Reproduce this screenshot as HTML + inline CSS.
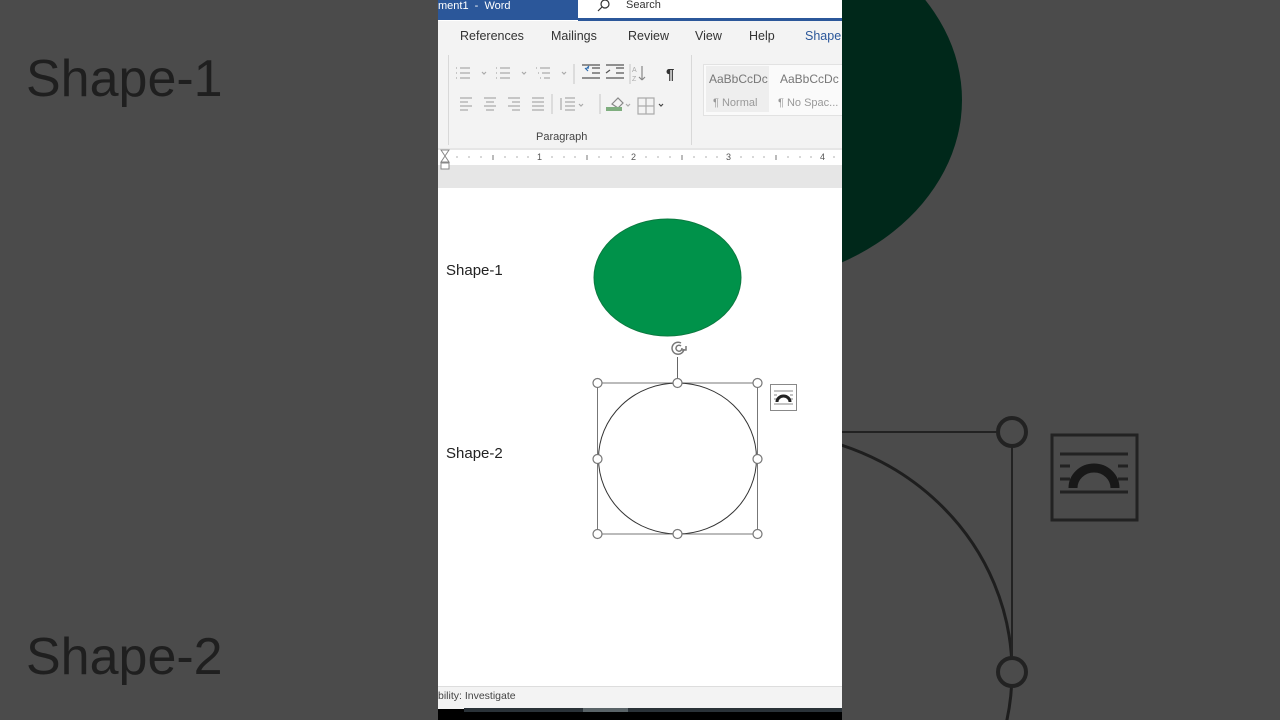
<!DOCTYPE html>
<html><head><meta charset="utf-8"><style>
html,body{margin:0;padding:0;width:1280px;height:720px;overflow:hidden;background:#4b4b4b;font-family:"Liberation Sans",sans-serif}
.abs{position:absolute}
</style></head><body>
<svg class="abs" style="left:0;top:0" width="1280" height="720">
<rect width="1280" height="720" fill="#4b4b4b"/>
<ellipse cx="728" cy="100" rx="234" ry="186" fill="#00281a"/>
<ellipse cx="759" cy="672" rx="253" ry="240" fill="none" stroke="#1e1e1e" stroke-width="3"/>
<line x1="842" y1="432" x2="1012" y2="432" stroke="#222" stroke-width="2"/>
<line x1="1012" y1="432" x2="1012" y2="672" stroke="#222" stroke-width="2"/>
<circle cx="1012" cy="432" r="14" fill="#4b4b4b" stroke="#222" stroke-width="4"/>
<circle cx="1012" cy="672" r="14" fill="#4b4b4b" stroke="#222" stroke-width="4"/>
<rect x="1052" y="435" width="85" height="85" fill="none" stroke="#222" stroke-width="3"/>
<g stroke="#222" stroke-width="3"><line x1="1060" y1="454" x2="1128" y2="454"/><line x1="1060" y1="492" x2="1128" y2="492"/>
<line x1="1060" y1="466" x2="1070" y2="466"/><line x1="1118" y1="466" x2="1128" y2="466"/><line x1="1060" y1="479" x2="1070" y2="479"/><line x1="1118" y1="479" x2="1128" y2="479"/></g>
<path d="M1073 488 A21 20 0 0 1 1115 488" fill="none" stroke="#181818" stroke-width="9"/>
<text x="26" y="96" font-size="52" fill="#1f1f1f" font-family="Liberation Sans, sans-serif">Shape-1</text>
<text x="26" y="674" font-size="52" fill="#1f1f1f" font-family="Liberation Sans, sans-serif">Shape-2</text>
</svg>

<div class="abs" style="left:438px;top:0;width:404px;height:720px;background:#fff;overflow:hidden">
  <div class="abs" style="left:0;top:0;width:140px;height:20px;background:#2b579a;color:#fff;font-size:11px;line-height:12px">ment1 &nbsp;-&nbsp; Word</div>
  <div class="abs" style="left:140px;top:0;width:264px;height:18px;background:#fff"></div>
  <div class="abs" style="left:140px;top:18px;width:264px;height:3px;background:#2b579a"></div>
  <svg class="abs" style="left:158px;top:0" width="16" height="14"><circle cx="9" cy="4" r="4" fill="none" stroke="#333" stroke-width="1.2"/><line x1="6" y1="7" x2="2" y2="11" stroke="#333" stroke-width="1.2"/></svg>
  <div class="abs" style="left:188px;top:-1px;font-size:11px;color:#333">Search</div>
  <div class="abs" style="left:0;top:21px;width:404px;height:127px;background:#f3f3f3"></div>
  <div class="abs" style="left:0;top:29px;width:404px;font-size:12.5px;color:#333">
    <span class="abs" style="left:22px">References</span><span class="abs" style="left:113px">Mailings</span><span class="abs" style="left:190px">Review</span><span class="abs" style="left:257px">View</span><span class="abs" style="left:311px">Help</span><span class="abs" style="left:367px;color:#2b579a">Shape</span>
  </div>
  <div class="abs" style="left:10px;top:55px;width:1px;height:90px;background:#d8d8d8"></div>
  <div class="abs" style="left:253px;top:55px;width:1px;height:90px;background:#d8d8d8"></div>
  <svg class="abs" style="left:16px;top:62px" width="230" height="56" fill="none" stroke="#aaa" stroke-width="1.2">
    <g><path d="M6 6h10M6 11h10M6 16h10"/><path d="M2 6h1M2 11h1M2 16h1"/><path d="M28 10l2 2 2-2"/></g>
    <g transform="translate(40,0)"><path d="M6 6h10M6 11h10M6 16h10M2 6h1M2 11h1M2 16h1M28 10l2 2 2-2"/></g>
    <g transform="translate(80,0)"><path d="M6 6h10M8 11h8M10 16h6M2 6h1M4 11h1M6 16h1M28 10l2 2 2-2"/></g>
    <path d="M120 2v20M176 2v20" stroke="#ccc"/>
    <g stroke="#2b6cb0"><path d="M135 6h-2l2-2M131 6l3 3"/></g>
    <g stroke="#555"><path d="M138 6h8M138 11h8M128 16h18M128 3h18"/></g>
    <g stroke="#555"><path d="M162 6h8M162 11h8M152 16h18M152 3h18M152 11l4-3"/></g>
    <path d="M188 4v14M188 18l-3-3M188 18l3-3" stroke="#888"/>
    <text x="178" y="10" font-size="7" fill="#aaa" stroke="none">A</text><text x="178" y="19" font-size="7" fill="#aaa" stroke="none">Z</text>
    <text x="212" y="17" font-size="15" fill="#333" stroke="none" font-weight="bold">¶</text>
    <g transform="translate(0,30)"><path d="M6 6h12M6 10h8M6 14h12M6 18h8"/><path d="M30 6h12M32 10h8M30 14h12M32 18h8"/><path d="M54 6h12M58 10h8M54 14h12M58 18h8"/><path d="M78 6h12M78 10h12M78 14h12M78 18h12"/>
    <path d="M98 2v20M146 2v20" stroke="#ccc"/><path d="M111 6h10M111 10h10M111 14h10M111 18h10M107 6v12"/><path d="M125 12l2 2 2-2"/>
    <path d="M158 12l6-6 5 5-5 5z" stroke="#888"/><path d="M172 12l2 2 2-2"/><path d="M184 6h16v16h-16zM192 6v16M184 14h16"/><path d="M205 12l2 2 2-2" stroke="#444"/></g>
  </svg>
  <div class="abs" style="left:168px;top:107px;width:16px;height:4px;background:#7fae7f"></div>
  <div class="abs" style="left:265px;top:64px;width:140px;height:50px;background:#fafafa;border:1px solid #e2e2e2"></div>
  <div class="abs" style="left:268px;top:66px;width:63px;height:46px;background:#eeeeee"></div>
  <div class="abs" style="left:271px;top:72px;font-size:12px;color:#777">AaBbCcDc</div>
  <div class="abs" style="left:342px;top:72px;font-size:12px;color:#777">AaBbCcDc</div>
  <div class="abs" style="left:275px;top:97px;font-size:11px;color:#999">¶ Normal</div>
  <div class="abs" style="left:340px;top:97px;font-size:11px;color:#999">¶ No Spac...</div>
  <div class="abs" style="left:98px;top:131px;font-size:11px;color:#444">Paragraph</div>
  <div class="abs" style="left:0;top:148px;width:404px;height:40px;background:#e6e6e6"></div>
  <div class="abs" style="left:0;top:150px;width:404px;height:15px;background:#fff"></div>
  <svg class="abs" style="left:0;top:148px" width="404" height="24">
    <path d="M3 2h8l-4 6zM3 14h8l-4-6z" fill="#fff" stroke="#888"/><rect x="3" y="15" width="8" height="6" fill="#fff" stroke="#888"/>
    <g fill="#555" font-size="9" font-family="Liberation Sans"><text x="99" y="12">1</text><text x="193" y="12">2</text><text x="288" y="12">3</text><text x="382" y="12">4</text></g>
    <g stroke="#777"><path d="M55 7v5M149 7v5M244 7v5M338 7v5"/></g>
    <g fill="#777"><circle cx="19" cy="9" r=".6"/><circle cx="31" cy="9" r=".6"/><circle cx="43" cy="9" r=".6"/><circle cx="67" cy="9" r=".6"/><circle cx="79" cy="9" r=".6"/><circle cx="90" cy="9" r=".6"/><circle cx="114" cy="9" r=".6"/><circle cx="126" cy="9" r=".6"/><circle cx="137" cy="9" r=".6"/><circle cx="161" cy="9" r=".6"/><circle cx="173" cy="9" r=".6"/><circle cx="185" cy="9" r=".6"/><circle cx="208" cy="9" r=".6"/><circle cx="220" cy="9" r=".6"/><circle cx="232" cy="9" r=".6"/><circle cx="256" cy="9" r=".6"/><circle cx="268" cy="9" r=".6"/><circle cx="279" cy="9" r=".6"/><circle cx="303" cy="9" r=".6"/><circle cx="315" cy="9" r=".6"/><circle cx="326" cy="9" r=".6"/><circle cx="350" cy="9" r=".6"/><circle cx="362" cy="9" r=".6"/><circle cx="373" cy="9" r=".6"/><circle cx="396" cy="9" r=".6"/></g>
  </svg>
  <div class="abs" style="left:8px;top:262px;font-size:15px;color:#222">Shape-1</div>
  <div class="abs" style="left:8px;top:445px;font-size:15px;color:#222">Shape-2</div>
  <svg class="abs" style="left:0;top:190px" width="404" height="360">
    <ellipse cx="229.5" cy="87.5" rx="73.5" ry="58.5" fill="#00924a" stroke="#0b7a40" stroke-width="1"/>
    <line x1="239.5" y1="167" x2="239.5" y2="193" stroke="#666"/>
    <path d="M246 159a6 6 0 1 1-3-6M243 156a3 3 0 1 0 1 2" fill="none" stroke="#777" stroke-width="1.5"/><path d="M244 160l4 0 0-4" fill="none" stroke="#777" stroke-width="1.5"/>
    <rect x="159.5" y="193" width="160" height="151" fill="none" stroke="#777"/>
    <ellipse cx="239.5" cy="268.5" rx="79" ry="75.5" fill="none" stroke="#333" stroke-width="1"/>
    <g fill="#fff" stroke="#777" stroke-width="1.2"><circle cx="159.5" cy="193" r="4.5"/><circle cx="239.5" cy="193" r="4.5"/><circle cx="319.5" cy="193" r="4.5"/><circle cx="159.5" cy="269" r="4.5"/><circle cx="319.5" cy="269" r="4.5"/><circle cx="159.5" cy="344" r="4.5"/><circle cx="239.5" cy="344" r="4.5"/><circle cx="319.5" cy="344" r="4.5"/></g>
    <rect x="332.5" y="194.5" width="26" height="26" fill="#fff" stroke="#888"/>
    <g stroke="#888"><path d="M336 201h19M336 214h19M336 205h3M352 205h3M336 209h3M352 209h3"/></g>
    <path d="M339 212a6.5 6 0 0 1 13 0" fill="none" stroke="#222" stroke-width="3"/>
  </svg>
  <div class="abs" style="left:0;top:686px;width:404px;height:23px;background:#f3f3f3;border-top:1px solid #ddd"></div>
  <div class="abs" style="left:0;top:690px;font-size:10.5px;color:#444">bility: Investigate</div>
  <div class="abs" style="left:0;top:709px;width:404px;height:11px;background:#000"></div>
  <div class="abs" style="left:26px;top:708px;width:378px;height:4px;background:#2a3238"></div>
  <div class="abs" style="left:145px;top:708px;width:45px;height:4px;background:#5a6468"></div>
</div>
</body></html>
